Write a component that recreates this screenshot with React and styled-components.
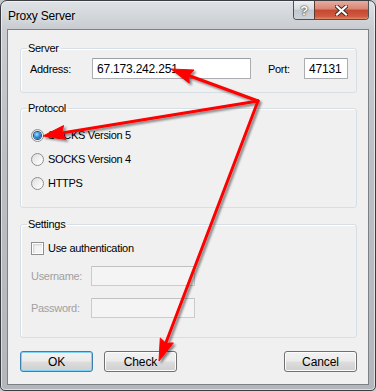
import React from 'react';
import styled, { createGlobalStyle } from 'styled-components';

const GlobalStyle = createGlobalStyle`
  html, body {
    margin: 0;
    padding: 0;
    background: #c4c7ca;
  }
  * { box-sizing: border-box; }
`;

const font = `"Liberation Sans", Arial, sans-serif`;

const Window = styled.div`
  position: relative;
  width: 376px;
  height: 391px;
  border: 1px solid #3a3e42;
  border-radius: 7px 7px 5px 5px;
  background: linear-gradient(180deg, #dfe2e5 0%, #c9cdd1 7%, #bcc0c4 40%, #b3b7bb 100%);
  box-shadow: inset 0 0 0 1px rgba(255, 255, 255, 0.55);
  display: flex;
  flex-direction: column;
  overflow: hidden;
  font-family: ${font};
  font-size: 11px;
  letter-spacing: -0.3px;
  color: #000;
`;

const TitleBar = styled.div`
  height: 28px;
  flex-shrink: 0;
  display: flex;
  align-items: flex-start;
  padding-left: 7px;
  padding-right: 6px;
`;

const Title = styled.div`
  margin-top: 6px;
  font-size: 12px;
  line-height: 18px;
  letter-spacing: -0.2px;
  text-shadow: 0 0 6px rgba(255, 255, 255, 0.9);
`;

const CaptionButtons = styled.div`
  margin-left: auto;
  display: flex;
  height: 19px;
  border: 1px solid #4d5257;
  border-top: none;
  border-radius: 0 0 4px 4px;
  overflow: hidden;
`;

const CaptionButton = styled.div`
  width: ${p => p.$w}px;
  display: flex;
  align-items: center;
  justify-content: center;
  background: ${p => p.$close
    ? 'linear-gradient(180deg, #e6ada0 0%, #d98472 45%, #c6472f 50%, #cf5a3f 85%, #df8b68 100%)'
    : 'linear-gradient(180deg, #eef0f2 0%, #d9dde1 45%, #c2c8ce 50%, #cdd3d8 100%)'};
  border-left: ${p => p.$close ? '1px solid #5a3a33' : 'none'};
  color: #fff;
  font-size: 13px;
  font-weight: bold;
  text-shadow: 0 0 2px #333, 0 0 1px #222;
`;

const Client = styled.div`
  flex: 1;
  margin: 0 6px 5px 6px;
  border: 1px solid #7b8187;
  background: #f0f0f0;
  padding: 11px 11px 0 12px;
  display: flex;
  flex-direction: column;
`;

const Group = styled.fieldset`
  margin: 0 0 ${p => p.$gap || 0}px 0;
  padding: 0;
  height: ${p => p.$h}px;
  border: 1px solid #d5dfe5;
  border-radius: 3px;
  box-shadow: inset 1px 1px 0 #fff;
`;

const Legend = styled.legend`
  margin-left: 6px;
  padding: 0 2px 0 1px;
  font-size: 11px;
  line-height: 14px;
`;

const GroupBody = styled.div`
  padding: ${p => p.$top}px 0 0 ${p => p.$left}px;
  display: flex;
  flex-direction: column;
`;

const Row = styled.div`
  display: flex;
  align-items: center;
  height: ${p => p.$h || 21}px;
  margin-top: ${p => p.$mt || 0}px;
`;

const Label = styled.span`
  width: ${p => p.$w}px;
  margin-left: ${p => p.$ml || 0}px;
  color: ${p => p.$disabled ? '#a0a0a0' : '#000'};
  flex-shrink: 0;
`;

const TextBox = styled.div`
  width: ${p => p.$w}px;
  height: ${p => p.$h || 21}px;
  border: 1px solid ${p => p.$disabled ? '#c9cbcd' : '#abadb3'};
  border-top-color: ${p => p.$disabled ? '#bfc1c3' : '#9da0a6'};
  border-radius: 1px;
  background: ${p => p.$disabled ? '#f4f4f4' : '#fff'};
  padding: 0 4px;
  display: flex;
  align-items: center;
  font-size: 12px;
  letter-spacing: -0.2px;
`;

const Option = styled.div`
  display: flex;
  align-items: center;
  height: ${p => p.$h || 24}px;
  gap: 4px;
`;

const Radio = styled.span`
  width: 13px;
  height: 13px;
  border-radius: 50%;
  border: 1px solid #8e8f8f;
  background: linear-gradient(135deg, #dcdcdc 0%, #f4f4f4 60%, #fff 100%);
  display: flex;
  align-items: center;
  justify-content: center;
  &::after {
    content: '';
    display: ${p => p.$checked ? 'block' : 'none'};
    width: 7px;
    height: 7px;
    border-radius: 50%;
    background: radial-gradient(circle at 40% 35%, #a9e0ff 0%, #3b95e0 40%, #0d3f78 100%);
    box-shadow: 0 0 0 1px #1b4f86;
  }
`;

const CheckBox = styled.span`
  width: 13px;
  height: 13px;
  border: 1px solid #8e8f8f;
  background: #f4f4f4;
  box-shadow: inset 0 0 0 1px #fff, inset 2px 2px 2px #cfcfcf;
`;

const ButtonRow = styled.div`
  display: flex;
  margin-top: 13px;
`;

const Button = styled.div`
  width: 73px;
  height: 21px;
  margin-left: ${p => p.$push ? 'auto' : `${p.$ml || 0}px`};
  border: 1px solid ${p => p.$default ? '#3c7fb1' : '#707070'};
  border-radius: 3px;
  background: linear-gradient(180deg, #f2f2f2 0%, #ebebeb 48%, #dddddd 52%, #cfcfcf 100%);
  box-shadow: ${p => p.$default
    ? 'inset 0 0 0 1px #7fd3f7'
    : 'inset 0 0 0 1px #fcfcfc'};
  display: flex;
  align-items: center;
  justify-content: center;
  font-size: 12px;
  letter-spacing: -0.1px;
`;

const Overlay = styled.svg`
  position: absolute;
  left: -1px;
  top: -1px;
  pointer-events: none;
`;

// arrows drawn over the screenshot: shaft from the apex + filled head at the tip
const apex = [258, 101];
const tips = [[171, 69], [43, 136], [159, 361]];

function arrowHead(x1, y1, x2, y2, len = 22, half = 7) {
  const dx = x2 - x1, dy = y2 - y1;
  const d = Math.hypot(dx, dy);
  const ux = dx / d, uy = dy / d;
  const bx = x2 - ux * len, by = y2 - uy * len;
  const px = -uy * half, py = ux * half;
  return `${x2},${y2} ${bx + px},${by + py} ${bx + ux * 3},${by + uy * 3} ${bx - px},${by - py}`;
}

const Arrows = () => (
  <Overlay width="376" height="391" viewBox="0 0 376 391">
    <defs>
      <filter id="sh" x="-10%" y="-10%" width="130%" height="130%">
        <feDropShadow dx="2" dy="2" stdDeviation="1.3" floodColor="#000" floodOpacity="0.45" />
      </filter>
    </defs>
    <g filter="url(#sh)" fill="#ff0000" stroke="#ff0000">
      {tips.map(([x, y], i) => {
        const dx = x - apex[0], dy = y - apex[1];
        const d = Math.hypot(dx, dy);
        const ex = x - (dx / d) * 16, ey = y - (dy / d) * 16;
        return (
          <g key={i}>
            <line x1={apex[0]} y1={apex[1]} x2={ex} y2={ey} strokeWidth="3" strokeLinecap="round" />
            <polygon points={arrowHead(apex[0], apex[1], x, y)} strokeWidth="1" strokeLinejoin="round" />
          </g>
        );
      })}
    </g>
  </Overlay>
);

const CloseGlyph = () => (
  <svg width="13" height="11" viewBox="0 0 13 11">
    <path d="M2 1.5 L11 9.5 M11 1.5 L2 9.5" stroke="#3a2a26" strokeWidth="4" strokeLinecap="square" />
    <path d="M2 1.5 L11 9.5 M11 1.5 L2 9.5" stroke="#fff" strokeWidth="2.2" strokeLinecap="square" />
  </svg>
);

const App = () => {
  return (
    <>
      <GlobalStyle />
      <Window>
        <TitleBar>
          <Title>Proxy Server</Title>
          <CaptionButtons>
            <CaptionButton $w={20}>?</CaptionButton>
            <CaptionButton $w={54} $close><CloseGlyph /></CaptionButton>
          </CaptionButtons>
        </TitleBar>

        <Client>
          <Group $h={52} $gap={8}>
            <Legend>Server</Legend>
            <GroupBody $top={3} $left={9}>
              <Row>
                <Label $w={62}>Address:</Label>
                <TextBox $w={159}>67.173.242.251</TextBox>
                <Label $w={36} $ml={17}>Port:</Label>
                <TextBox $w={44}>47131</TextBox>
              </Row>
            </GroupBody>
          </Group>

          <Group $h={107} $gap={9}>
            <Legend>Protocol</Legend>
            <GroupBody $top={8} $left={10}>
              <Option><Radio $checked />SOCKS Version 5</Option>
              <Option><Radio />SOCKS Version 4</Option>
              <Option><Radio />HTTPS</Option>
            </GroupBody>
          </Group>

          <Group $h={121}>
            <Legend>Settings</Legend>
            <GroupBody $top={6} $left={10}>
              <Option $h={22}><CheckBox />Use authentication</Option>
              <Row $h={20} $mt={7}>
                <Label $w={60} $disabled>Username:</Label>
                <TextBox $w={104} $h={20} $disabled />
              </Row>
              <Row $h={20} $mt={12}>
                <Label $w={60} $disabled>Password:</Label>
                <TextBox $w={104} $h={20} $disabled />
              </Row>
            </GroupBody>
          </Group>

          <ButtonRow>
            <Button $default>OK</Button>
            <Button $ml={11}>Check</Button>
            <Button $push>Cancel</Button>
          </ButtonRow>
        </Client>

        <Arrows />
      </Window>
    </>
  );
};

export default App;
